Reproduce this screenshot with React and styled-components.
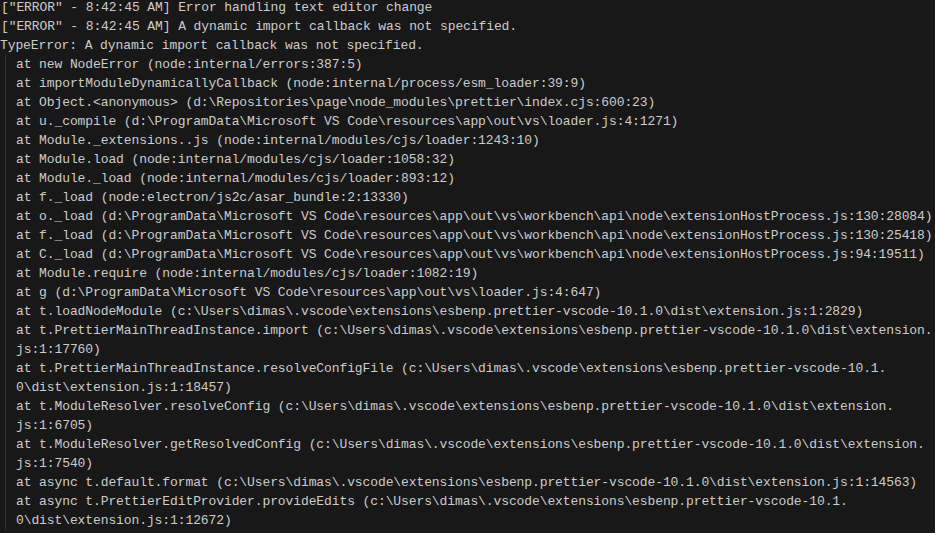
import styled, { createGlobalStyle } from "styled-components";

const GlobalStyle = createGlobalStyle`
  html, body {
    margin: 0;
    padding: 0;
    background: #181818;
  }
`;

const Panel = styled.div`
  display: flex;
  flex-direction: column;
  min-height: 100vh;
  box-sizing: border-box;
  margin-top: -2px;
  padding-bottom: 2px;
  background: #181818;
  color: #cccccc;
  font-family: "Liberation Mono", "DejaVu Sans Mono", monospace;
  font-size: 13px;
  letter-spacing: -0.1px;
  line-height: 19px;
  overflow: hidden;
`;

const Line = styled.div`
  white-space: pre;
  padding-left: ${(p) => p.$indent || 0}px;
`;

// indented stack frames with the editor's indent guide on the left
const Frames = styled.div`
  flex: 1;
  margin-left: 5px;
  border-left: 1px solid #333333;
  padding-left: 10px;
`;

const header = [
  '["ERROR" - 8:42:45 AM] Error handling text editor change',
  '["ERROR" - 8:42:45 AM] A dynamic import callback was not specified.',
];

const frames = [
  "at new NodeError (node:internal/errors:387:5)",
  "at importModuleDynamicallyCallback (node:internal/process/esm_loader:39:9)",
  "at Object.<anonymous> (d:\\Repositories\\page\\node_modules\\prettier\\index.cjs:600:23)",
  "at u._compile (d:\\ProgramData\\Microsoft VS Code\\resources\\app\\out\\vs\\loader.js:4:1271)",
  "at Module._extensions..js (node:internal/modules/cjs/loader:1243:10)",
  "at Module.load (node:internal/modules/cjs/loader:1058:32)",
  "at Module._load (node:internal/modules/cjs/loader:893:12)",
  "at f._load (node:electron/js2c/asar_bundle:2:13330)",
  "at o._load (d:\\ProgramData\\Microsoft VS Code\\resources\\app\\out\\vs\\workbench\\api\\node\\extensionHostProcess.js:130:28084)",
  "at f._load (d:\\ProgramData\\Microsoft VS Code\\resources\\app\\out\\vs\\workbench\\api\\node\\extensionHostProcess.js:130:25418)",
  "at C._load (d:\\ProgramData\\Microsoft VS Code\\resources\\app\\out\\vs\\workbench\\api\\node\\extensionHostProcess.js:94:19511)",
  "at Module.require (node:internal/modules/cjs/loader:1082:19)",
  "at g (d:\\ProgramData\\Microsoft VS Code\\resources\\app\\out\\vs\\loader.js:4:647)",
  "at t.loadNodeModule (c:\\Users\\dimas\\.vscode\\extensions\\esbenp.prettier-vscode-10.1.0\\dist\\extension.js:1:2829)",
  "at t.PrettierMainThreadInstance.import (c:\\Users\\dimas\\.vscode\\extensions\\esbenp.prettier-vscode-10.1.0\\dist\\extension.",
  "js:1:17760)",
  "at t.PrettierMainThreadInstance.resolveConfigFile (c:\\Users\\dimas\\.vscode\\extensions\\esbenp.prettier-vscode-10.1.",
  "0\\dist\\extension.js:1:18457)",
  "at t.ModuleResolver.resolveConfig (c:\\Users\\dimas\\.vscode\\extensions\\esbenp.prettier-vscode-10.1.0\\dist\\extension.",
  "js:1:6705)",
  "at t.ModuleResolver.getResolvedConfig (c:\\Users\\dimas\\.vscode\\extensions\\esbenp.prettier-vscode-10.1.0\\dist\\extension.",
  "js:1:7540)",
  "at async t.default.format (c:\\Users\\dimas\\.vscode\\extensions\\esbenp.prettier-vscode-10.1.0\\dist\\extension.js:1:14563)",
  "at async t.PrettierEditProvider.provideEdits (c:\\Users\\dimas\\.vscode\\extensions\\esbenp.prettier-vscode-10.1.",
  "0\\dist\\extension.js:1:12672)",
];

const App = () => {
  return (
    <>
      <GlobalStyle />
      <Panel>
        {header.map((text, i) => (
          <Line key={i} $indent={1}>{text}</Line>
        ))}
        <Line>TypeError: A dynamic import callback was not specified.</Line>
        <Frames>
          {frames.map((text, i) => (
            <Line key={i}>{text}</Line>
          ))}
        </Frames>
      </Panel>
    </>
  );
};

export default App;
